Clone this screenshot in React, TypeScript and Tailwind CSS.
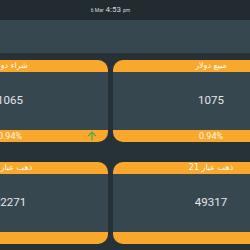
import React from "react";

const ORANGE = "bg-[#f9a82b]";

function Arrow() {
  return (
    <svg width="10" height="10" viewBox="0 0 10 10" className="absolute right-[11px] top-[1px]">
      <path d="M5 9.5V1.2M1.2 5L5 1.2L8.8 5" fill="none" stroke="#4caf50" strokeWidth="1.3" />
    </svg>
  );
}

function Card({ title, value, pct, arrow }: { title: string; value: string; pct?: string; arrow?: boolean }) {
  return (
    <div className="h-[82px] rounded-[10px] overflow-hidden flex flex-col bg-[#37474f]">
      <div
        className={`${ORANGE} h-[12px] flex items-center justify-center text-[8px] leading-none text-white`}
        dir="rtl"
        style={{ fontFamily: '"DejaVu Sans", sans-serif' }}
      >
        {title}
      </div>
      <div className="flex-1 flex items-center justify-center text-[11.5px] text-[#e4e6e7] font-['Roboto',sans-serif]">
        {value}
      </div>
      <div className={`${ORANGE} relative h-[12px] flex items-center justify-center text-[9px] leading-none text-[#fff6ea] font-['Roboto',sans-serif]`}>
        {pct}
        {arrow && <Arrow />}
      </div>
    </div>
  );
}

export default function App() {
  return (
    <div className="w-[250px] h-[250px] overflow-hidden bg-[#263238]">
      <div className="w-[397px] ml-[-88px]">
        <div className="h-[20px] bg-[#222b30] flex items-center justify-center gap-[2px] text-[#d7dadb] font-['Roboto',sans-serif]">
          <span className="text-[5px] leading-none">6 Mar</span>
          <span className="text-[8px] leading-none">4:53</span>
          <span className="text-[5px] leading-none">pm</span>
        </div>
        <div className="h-[33px] bg-[#37474f]" />
        <div className="pt-[7px] grid grid-cols-2 gap-x-[5px] gap-y-[20px]">
          <Card title="شراء دولار" value="1065" pct="0.94%" arrow />
          <Card title="مبيع دولار" value="1075" pct="0.94%" arrow />
          <Card title="ذهب عيار 18" value="42271" />
          <Card title="ذهب عيار 21" value="49317" />
        </div>
      </div>
    </div>
  );
}
